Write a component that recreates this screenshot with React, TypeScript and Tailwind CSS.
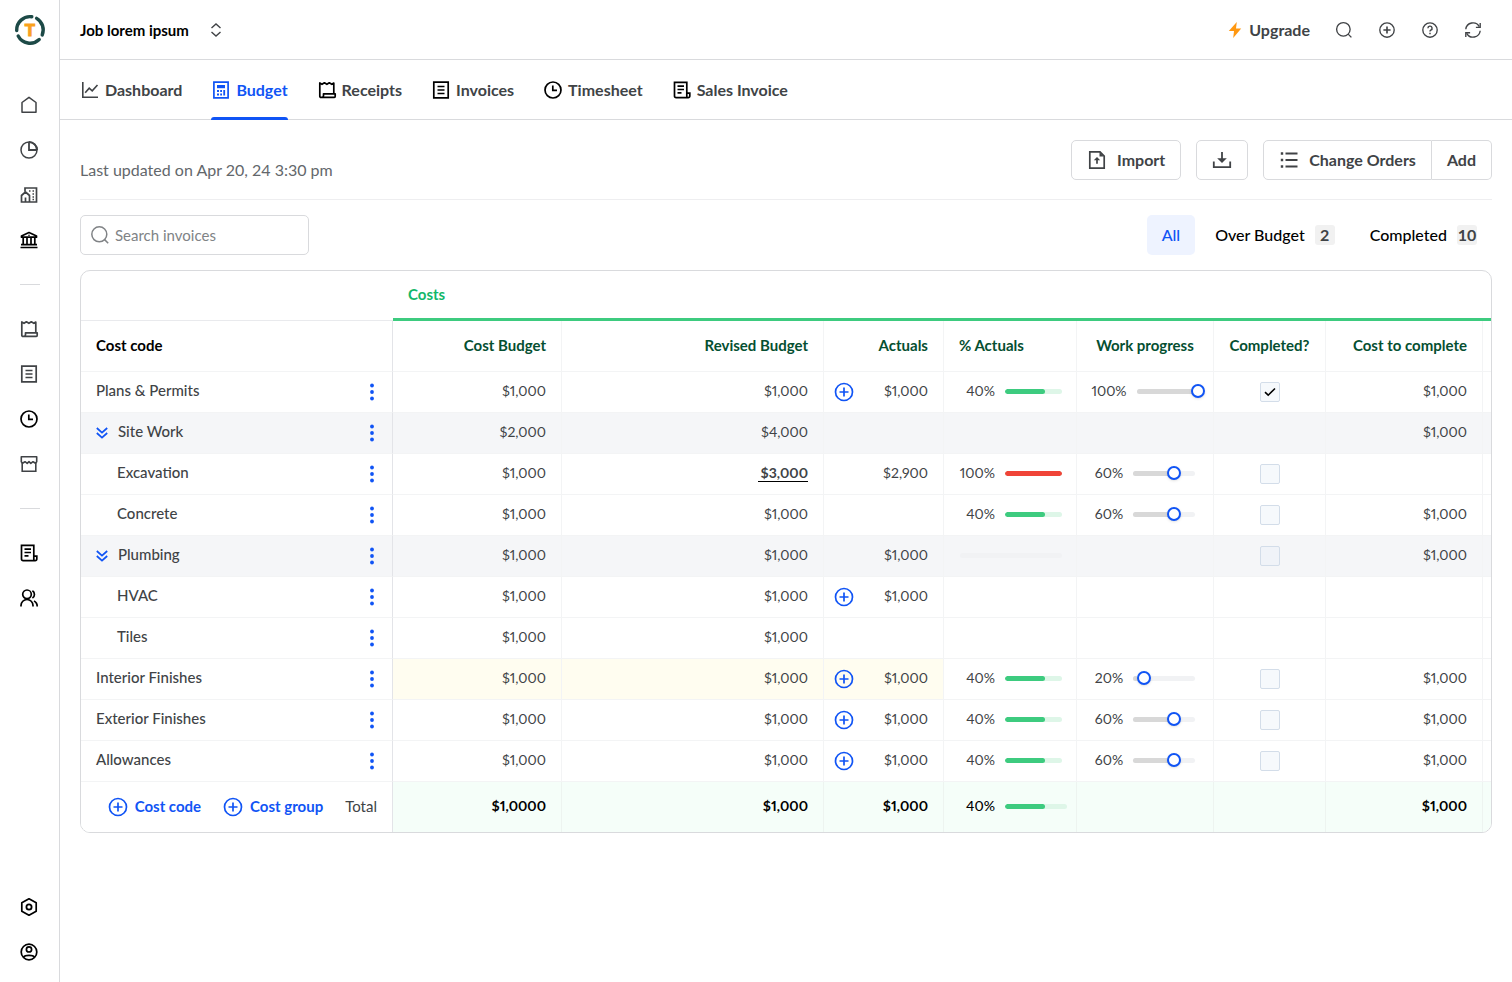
import { useState } from 'react'
import type { ReactNode } from 'react'
import clsx from 'clsx'

type IconProps = { className?: string; children?: ReactNode }

function Icon({ className = 'size-5', children }: IconProps) {
  return (
    <svg
      viewBox="0 0 20 20"
      fill="none"
      stroke="currentColor"
      strokeWidth={1.5}
      className={clsx('shrink-0', className)}
      aria-hidden
    >
      {children}
    </svg>
  )
}

const HomeIcon = () => (
  <Icon>
    <path d="M3 17.2V7.5L10 2.3L17 7.5V17.2Z" strokeLinejoin="round" />
  </Icon>
)

const PieIcon = () => (
  <Icon>
    <circle cx="10" cy="10" r="8" />
    <path d="M10 2V10H18" strokeWidth={1.8} />
    <path d="M10 2A8 8 0 0 1 18 10" strokeWidth={2} />
  </Icon>
)

const BuildingIcon = () => (
  <Icon>
    <path d="M6 6.5V3H17.5V17H2.5V10.5L6.5 7L10.5 10.5V17M6.5 17V12.5" strokeWidth={1.7} />
    <path d="M10 6H11.5M13.5 6H15M13.5 9H15M13.5 12H15M13.5 14.5H15" />
  </Icon>
)

const BankIcon = () => (
  <Icon>
    <path d="M2.5 7.2V6L10 2.5L17.5 6V7.2Z" strokeWidth={1.7} strokeLinejoin="round" />
    <path d="M4.2 8V15M8 8V15M12 8V15M15.8 8V15M2 14.7H18M1.5 17.5H18.5" strokeWidth={1.7} />
    <circle cx="10" cy="5.2" r="0.8" fill="currentColor" stroke="none" />
  </Icon>
)

const ReceiptIcon = () => (
  <Icon>
    <path
      d="M16.8 13.8V3L14.8 4.3L12.3 2.8L9.9 4.3L7.4 2.8L5 4.3L2.8 3V16.2A1.2 1.2 0 0 0 4 17.4H17.2A1.2 1.2 0 0 0 18.2 16.2V13.8H6.5V15.5A1.8 1.8 0 0 1 4.6 17.4"
      strokeWidth={1.7}
      strokeLinejoin="round"
    />
  </Icon>
)

const InvoiceIcon = () => (
  <Icon>
    <path d="M2.8 2.2H17.2V17.8H2.8Z" strokeWidth={1.7} />
    <path d="M6.5 6.5H13.5M6.5 10H13.5M6.5 13.5H13.5" strokeWidth={1.7} />
  </Icon>
)

const ClockIcon = () => (
  <Icon>
    <circle cx="10" cy="10" r="8" strokeWidth={1.7} />
    <path d="M9.8 5.5V10.4H14" strokeWidth={1.7} />
  </Icon>
)

const StoreIcon = () => (
  <Icon>
    <path d="M2.3 2.8H17.7V7.7L16.5 9.2L14 7.7L11.8 9.4L10 7.7L8.2 9.4L6 7.7L3.5 9.2L2.3 7.7Z" strokeWidth={1.6} strokeLinejoin="round" />
    <path d="M3.2 8.5V17.2H16.8V8.5" strokeWidth={1.6} />
  </Icon>
)

const SalesIcon = () => (
  <Icon>
    <path d="M14.8 12.8V2.3H2.5V16A1.6 1.6 0 0 0 4.1 17.7H16.2A1.6 1.6 0 0 0 17.8 16V13.2H14.8V16.2A1.5 1.5 0 0 0 16.2 17.7" strokeWidth={1.7} />
    <path d="M5.5 6.2H12M5.5 9.5H12M5.5 12.8H9.5" strokeWidth={1.7} />
  </Icon>
)

const PeopleIcon = () => (
  <Icon>
    <circle cx="8" cy="6.3" r="4.3" strokeWidth={1.7} />
    <path d="M2 18.5V17.5A6 6 0 0 1 14 17.5V18.5M13.4 2.8A4.2 4.2 0 0 1 13.4 10M15 13A6 6 0 0 1 18.2 18.5" strokeWidth={1.7} />
  </Icon>
)

const SettingsIcon = () => (
  <Icon>
    <path d="M10 1.8L17.2 5.8V14.2L10 18.2L2.8 14.2V5.8Z" strokeWidth={1.7} strokeLinejoin="round" />
    <circle cx="10" cy="10" r="2.6" strokeWidth={1.8} />
  </Icon>
)

const ProfileIcon = () => (
  <Icon>
    <circle cx="10" cy="10" r="7.8" strokeWidth={1.7} />
    <circle cx="10" cy="7.4" r="2.6" strokeWidth={1.7} />
    <path d="M4.5 15.2C6 12.8 14 12.8 15.5 15.2" strokeWidth={1.7} />
  </Icon>
)

const ChartIcon = () => (
  <Icon>
    <path d="M2.8 2V17.2H18M5.2 12.8L9.2 8.2L12.2 10.8L17.5 5" strokeWidth={1.6} />
  </Icon>
)

const CalculatorIcon = () => (
  <Icon>
    <path d="M2.9 2.2H17.1V17.8H2.9Z" strokeWidth={1.7} />
    <path d="M6 5H14V8.2H6Z" fill="currentColor" stroke="none" />
    <path d="M6 11H8M9.2 11H11M6 14.5H8M9.2 14.5H11M13.2 10V15.6" strokeWidth={1.8} />
  </Icon>
)

const PlusCircleIcon = ({ className }: IconProps) => (
  <Icon className={className}>
    <circle cx="10" cy="10" r="8.5" strokeWidth={1.7} />
    <path d="M10 5.5V14.5M5.5 10H14.5" strokeWidth={1.7} />
  </Icon>
)

const SearchIcon = ({ className }: IconProps) => (
  <Icon className={className}>
    <circle cx="9.3" cy="9.3" r="7.5" />
    <path d="M14.6 14.6L18.2 18.2" />
  </Icon>
)

const HelpIcon = () => (
  <Icon className="size-[18px]">
    <circle cx="10" cy="10" r="8" />
    <path d="M7.7 8A2.3 2.3 0 1 1 10.9 10.1C10.2 10.5 10 10.8 10 11.6M10 13V14.6" strokeWidth={1.6} />
  </Icon>
)

const RefreshIcon = () => (
  <Icon className="size-[18px]">
    <path d="M2 9.2A8 8 0 0 1 17 6.3M18 10.8A8 8 0 0 1 3 13.7" />
    <path d="M18 2.2V7H13.2M2 17.8V13H6.8" />
  </Icon>
)

const ImportIcon = () => (
  <Icon>
    <path d="M2.8 1.8H13L17.2 6V18.2H2.8Z" strokeWidth={1.7} />
    <path d="M12.5 2V6.5H17Z" fill="currentColor" stroke="none" />
    <path d="M10 13.8V9" strokeWidth={1.7} />
    <path d="M6.8 10.2L10 7L13.2 10.2Z" fill="currentColor" stroke="none" />
  </Icon>
)

const DownloadIcon = () => (
  <Icon>
    <path d="M1.8 11.5V17.2H18.2V11.5" strokeWidth={1.8} />
    <path d="M10 2V10" strokeWidth={1.8} />
    <path d="M5.2 8.2H14.8L10 13Z" fill="currentColor" stroke="none" />
  </Icon>
)

const ListIcon = () => (
  <Icon>
    <path d="M6.5 3.5H18.5M6.5 10H18.5M6.5 16.5H18.5" strokeWidth={1.8} />
    <path d="M1.8 3.5H4.2M1.8 10H4.2M1.8 16.5H4.2" strokeWidth={2.6} />
  </Icon>
)

const DoubleChevronIcon = () => (
  <svg viewBox="0 0 12 12" fill="none" stroke="currentColor" strokeWidth={1.7} className="size-3" aria-hidden>
    <path d="M0.8 1L6 5.7L11.2 1M0.8 6L6 10.7L11.2 6" />
  </svg>
)

const DotsIcon = () => (
  <svg viewBox="0 0 4 18" fill="currentColor" className="h-[18px] w-1" aria-hidden>
    <circle cx="2" cy="2.5" r="1.9" />
    <circle cx="2" cy="9" r="1.9" />
    <circle cx="2" cy="15.5" r="1.9" />
  </svg>
)

function Logo() {
  return (
    <svg viewBox="0 0 32 32" fill="none" className="size-8" role="img" aria-label="Logo">
      <g stroke="#1d4a47" strokeWidth={3.4} strokeLinecap="round">
        <path d="M2.7 16.5A13.3 13.3 0 0 1 17.8 2.8" />
        <path d="M22.6 4.4A13.3 13.3 0 0 1 28.2 21" />
        <path d="M25.2 25.5A13.3 13.3 0 0 1 4.2 22" />
      </g>
      <text x="16" y="22" textAnchor="middle" fill="#f9a11b" stroke="#f9a11b" strokeWidth={1} fontSize="17" fontWeight="900">
        T
      </text>
    </svg>
  )
}

type NavItem = { label: string; icon: ReactNode; strong?: boolean }

const navGroups: NavItem[][] = [
  [
    { label: 'Home', icon: <HomeIcon /> },
    { label: 'Reports', icon: <PieIcon /> },
    { label: 'Properties', icon: <BuildingIcon /> },
    { label: 'Bank', icon: <BankIcon />, strong: true },
  ],
  [
    { label: 'Receipts', icon: <ReceiptIcon /> },
    { label: 'Invoices', icon: <InvoiceIcon /> },
    { label: 'Timesheet', icon: <ClockIcon />, strong: true },
    { label: 'Vendors', icon: <StoreIcon /> },
  ],
  [
    { label: 'Sales invoices', icon: <SalesIcon />, strong: true },
    { label: 'Team', icon: <PeopleIcon />, strong: true },
  ],
]

const footerNav: NavItem[] = [
  { label: 'Settings', icon: <SettingsIcon />, strong: true },
  { label: 'Profile', icon: <ProfileIcon />, strong: true },
]

const tabs = [
  { label: 'Dashboard', icon: <ChartIcon />, dim: true },
  { label: 'Budget', icon: <CalculatorIcon /> },
  { label: 'Receipts', icon: <ReceiptIcon /> },
  { label: 'Invoices', icon: <InvoiceIcon /> },
  { label: 'Timesheet', icon: <ClockIcon /> },
  { label: 'Sales Invoice', icon: <SalesIcon /> },
]

const filters = [
  { label: 'All' },
  { label: 'Over Budget', count: 2 },
  { label: 'Completed', count: 10 },
]

type Row = {
  name: string
  kind?: 'group' | 'child'
  budget: string
  revised: string
  edited?: boolean
  highlight?: boolean
  addActual?: boolean
  actuals?: string
  percent?: { label: string; fill: number; over?: boolean }
  emptyBar?: boolean
  progress?: { label: string; knob: number }
  completed?: boolean
  toComplete?: string
}

const forty = { label: '40%', fill: 70 }
const sixty = { label: '60%', knob: 63 }

const rows: Row[] = [
  { name: 'Plans & Permits', budget: '$1,000', revised: '$1,000', addActual: true, actuals: '$1,000', percent: forty, progress: { label: '100%', knob: 100 }, completed: true, toComplete: '$1,000' },
  { name: 'Site Work', kind: 'group', budget: '$2,000', revised: '$4,000', toComplete: '$1,000' },
  { name: 'Excavation', kind: 'child', budget: '$1,000', revised: '$3,000', edited: true, actuals: '$2,900', percent: { label: '100%', fill: 100, over: true }, progress: sixty, completed: false },
  { name: 'Concrete', kind: 'child', budget: '$1,000', revised: '$1,000', percent: forty, progress: sixty, completed: false, toComplete: '$1,000' },
  { name: 'Plumbing', kind: 'group', budget: '$1,000', revised: '$1,000', actuals: '$1,000', emptyBar: true, completed: false, toComplete: '$1,000' },
  { name: 'HVAC', kind: 'child', budget: '$1,000', revised: '$1,000', addActual: true, actuals: '$1,000' },
  { name: 'Tiles', kind: 'child', budget: '$1,000', revised: '$1,000' },
  { name: 'Interior Finishes', budget: '$1,000', revised: '$1,000', highlight: true, addActual: true, actuals: '$1,000', percent: forty, progress: { label: '20%', knob: 8 }, completed: false, toComplete: '$1,000' },
  { name: 'Exterior Finishes', budget: '$1,000', revised: '$1,000', addActual: true, actuals: '$1,000', percent: forty, progress: sixty, completed: false, toComplete: '$1,000' },
  { name: 'Allowances', budget: '$1,000', revised: '$1,000', addActual: true, actuals: '$1,000', percent: forty, progress: sixty, completed: false, toComplete: '$1,000' },
]

function NavButton({ item }: { item: NavItem }) {
  return (
    <button
      type="button"
      aria-label={item.label}
      className={clsx('flex h-[45px] w-full items-center justify-center pr-px', item.strong ? 'text-black' : 'text-[#404346]')}
    >
      {item.icon}
    </button>
  )
}

function Sidebar() {
  return (
    <aside className="flex w-[60px] shrink-0 flex-col border-r border-[#d9dadd] pb-2">
      <div className="flex h-[60px] items-center justify-center">
        <Logo />
      </div>
      <nav className="flex flex-1 flex-col pt-[22px]">
        {navGroups.map((group, i) => (
          <div key={group[0].label}>
            {i > 0 ? (
              <div className="flex h-11 items-center justify-center">
                <hr className="w-5 border-[#d9dadd]" />
              </div>
            ) : null}
            {group.map((item) => (
              <NavButton key={item.label} item={item} />
            ))}
          </div>
        ))}
        <div className="mt-auto">
          {footerNav.map((item) => (
            <NavButton key={item.label} item={item} />
          ))}
        </div>
      </nav>
    </aside>
  )
}

function Header() {
  return (
    <header className="flex h-[60px] items-center justify-between border-b border-[#d9dadd] pr-[30px] pl-5">
      <button type="button" className="flex items-center gap-5 font-bold text-black">
        Job lorem ipsum
        <svg viewBox="0 0 14 14" fill="none" stroke="#404346" strokeWidth={1.4} className="size-3.5" aria-hidden>
          <path d="M2.5 5L7 1L11.5 5M2.5 9L7 13L11.5 9" />
        </svg>
      </button>
      <div className="flex items-center gap-[25px]">
        <button type="button" className="flex items-center gap-[7px] text-base leading-5 font-bold">
          <svg viewBox="0 0 14 16" fill="#ff9811" className="h-4 w-3.5" aria-hidden>
            <path d="M8.8 0L0.8 9H6L5.2 16L13.2 6.6H8Z" />
          </svg>
          Upgrade
        </button>
        <button type="button" aria-label="Search">
          <SearchIcon className="size-[18px]" />
        </button>
        <button type="button" aria-label="Add">
          <Icon className="size-[18px]">
            <circle cx="10" cy="10" r="8" />
            <path d="M10 6V14M6 10H14" strokeWidth={1.8} />
          </Icon>
        </button>
        <button type="button" aria-label="Help">
          <HelpIcon />
        </button>
        <button type="button" aria-label="Refresh">
          <RefreshIcon />
        </button>
      </div>
    </header>
  )
}

function Tabs() {
  const [active, setActive] = useState('Budget')

  return (
    <nav className="flex h-[60px] gap-[29px] border-b border-[#d9dadd] px-5 text-base leading-5">
      {tabs.map((tab) => {
        const isActive = tab.label === active
        return (
          <button
            key={tab.label}
            type="button"
            onClick={() => setActive(tab.label)}
            className={clsx('relative flex items-center gap-[5px] font-bold', isActive && 'text-[#1054f5]')}
          >
            <span className={clsx('flex', !isActive && !tab.dim && 'text-black')}>{tab.icon}</span>
            {tab.label}
            {isActive ? <span className="absolute inset-x-0 -bottom-px h-[3px] rounded-t-sm bg-[#1054f5]" /> : null}
          </button>
        )
      })}
    </nav>
  )
}

function Toolbar() {
  const btn = 'flex h-10 items-center rounded-[5px] border border-[#d9dadd] bg-white px-[15px] font-bold'

  return (
    <div className="flex items-end justify-between border-b border-[#eeeef0] pb-[19px] text-base leading-5">
      <p className="text-[#63676b]">Last updated on Apr 20, 24 3:30 pm</p>
      <div className="flex gap-[15px]">
        <button type="button" className={`${btn} gap-2.5`}>
          <ImportIcon />
          Import
        </button>
        <button type="button" aria-label="Download" className={btn}>
          <DownloadIcon />
        </button>
        <div className="flex">
          <button type="button" className={`${btn} gap-2.5 rounded-r-none`}>
            <ListIcon />
            Change Orders
          </button>
          <button type="button" className={`${btn} rounded-l-none border-l-0`}>
            Add
          </button>
        </div>
      </div>
    </div>
  )
}

function FilterBar() {
  const [active, setActive] = useState('All')

  return (
    <div className="flex items-center justify-between py-[15px]">
      <label className="flex h-10 w-[229px] items-center gap-[5px] rounded-[5px] border border-[#d9dadd] pl-[9px] text-[#808386]">
        <SearchIcon className="size-5" />
        <input type="text" aria-label="Search invoices" placeholder="Search invoices" className="w-full min-w-0 outline-none placeholder:text-[#808386]" />
      </label>
      <div className="flex gap-[5px] text-base leading-5">
        {filters.map((f) => (
          <button
            key={f.label}
            type="button"
            onClick={() => setActive(f.label)}
            className={clsx(
              'flex h-10 items-center gap-2.5 rounded-[5px] px-[15px] font-medium',
              f.label === active ? 'bg-[#eef3ff] text-[#1054f5]' : 'text-black',
            )}
          >
            {f.label}
            {f.count ? (
              <span className="flex h-5 w-5 items-center justify-center rounded-[3px] bg-[#f1f1f1] font-bold text-[#404346]">
                {f.count}
              </span>
            ) : null}
          </button>
        ))}
      </div>
    </div>
  )
}

function PercentBar({ label, fill, over, wide }: { label: string; fill: number; over?: boolean; wide?: boolean }) {
  return (
    <div className="flex items-center justify-end gap-2.5">
      {label}
      <span className={clsx('h-[5px] shrink-0 overflow-hidden rounded-full bg-[#def6e8]', wide ? 'w-[62px]' : 'w-[57px]')}>
        <span className={clsx('block h-full rounded-full', over ? 'bg-[#f04438]' : 'bg-[#3dcb7f]')} style={{ width: `${fill}%` }} />
      </span>
    </div>
  )
}

function ProgressSlider({ name, label, knob }: { name: string; label: string; knob: number }) {
  const [value, setValue] = useState(knob)

  return (
    <div className="flex items-center justify-center gap-2.5">
      {label}
      <span className="relative h-[5px] w-[62px] shrink-0 rounded-full bg-[#f1f2f4]">
        <span className="block h-full rounded-full bg-[#d8d8d8]" style={{ width: `${value}%` }} />
        <input
          type="range"
          aria-label={`${name} work progress`}
          value={value}
          onChange={(e) => setValue(Number(e.target.value))}
          className="absolute top-[-5px] left-0 h-3.5 w-[68px] appearance-none bg-transparent [&::-webkit-slider-thumb]:size-3.5 [&::-webkit-slider-thumb]:appearance-none [&::-webkit-slider-thumb]:rounded-full [&::-webkit-slider-thumb]:border-2 [&::-webkit-slider-thumb]:border-[#1054f5] [&::-webkit-slider-thumb]:bg-white [&::-webkit-slider-thumb]:shadow-sm"
        />
      </span>
    </div>
  )
}

function CompletedBox({ name, checked }: { name: string; checked: boolean }) {
  return (
    <span className="grid place-items-center">
      <input
        type="checkbox"
        aria-label={`${name} completed`}
        defaultChecked={checked}
        className="peer col-start-1 row-start-1 size-5 appearance-none rounded-xs border border-[#d3dde9] bg-[#e9f0f8]/40"
      />
      <svg viewBox="0 0 12 12" fill="none" stroke="#000" strokeWidth={1.6} className="pointer-events-none col-start-1 row-start-1 hidden size-3 peer-checked:block" aria-hidden>
        <path d="M1 6.2L4.2 9.2L11 2.5" />
      </svg>
    </span>
  )
}

const line = 'border-r border-b border-[#f3f4f5]'
const cell = `${line} px-[15px] pb-0.5`
const money = `${cell} text-right`

function BudgetRow({ row }: { row: Row }) {
  const isGroup = row.kind === 'group'
  const tint = row.highlight && 'bg-[#fffdf0]'

  return (
    <tr className={clsx('h-[41px] text-sm', isGroup && 'bg-[#f5f6f8]')}>
      <th scope="row" className="border-r border-b border-r-[#e3e4e8] border-b-[#f3f4f5] px-[15px] text-left text-[15px] font-medium">
        <div className={clsx('flex items-center', row.kind === 'child' && 'pl-[21px]')}>
          {isGroup ? (
            <button type="button" aria-label={`Collapse ${row.name}`} className="mr-2.5 text-[#1054f5]">
              <DoubleChevronIcon />
            </button>
          ) : null}
          <span className="pb-0.5">{row.name}</span>
          <button type="button" aria-label={`${row.name} options`} className="mr-[3px] ml-auto text-[#1054f5]">
            <DotsIcon />
          </button>
        </div>
      </th>
      <td className={clsx(money, tint)}>{row.budget}</td>
      <td className={clsx(money, tint)}>
        {row.edited ? <span className="border-b border-black pl-[3px] font-bold">{row.revised}</span> : row.revised}
      </td>
      <td className={clsx(line, 'pr-[15px] pl-2.5', tint)}>
        <div className="flex items-center justify-between">
          {row.addActual ? (
            <button type="button" aria-label={`Add actual to ${row.name}`} className="text-[#1054f5]">
              <PlusCircleIcon />
            </button>
          ) : null}
          <span className="ml-auto pb-0.5">{row.actuals}</span>
        </div>
      </td>
      <td className={`${line} pr-3.5 pb-0.5 pl-4`}>
        {row.percent ? <PercentBar {...row.percent} /> : null}
        {row.emptyBar ? <div className="h-[5px] rounded-full bg-[#f1f2f4]" /> : null}
      </td>
      <td className={cell}>{row.progress ? <ProgressSlider name={row.name} {...row.progress} /> : null}</td>
      <td className={`${line} pr-3.5 pl-4`}>
        {row.completed !== undefined ? <CompletedBox name={row.name} checked={row.completed} /> : null}
      </td>
      <td className={money}>{row.toComplete}</td>
      <td className="border-b border-[#f3f4f5]" />
    </tr>
  )
}

function BudgetTable() {
  const head = `${cell} font-bold whitespace-nowrap`
  const total = 'border-r border-[#edf4f0] px-[15px] pb-0.5 text-right font-bold text-black'

  return (
    <div className="overflow-hidden rounded-[10px] border border-[#d9dadd]">
      <table className="w-full table-fixed border-separate border-spacing-0 proportional-nums">
        <colgroup>
          <col className="w-[312px]" />
          <col className="w-[169px]" />
          <col />
          <col className="w-[120px]" />
          <col className="w-[133px]" />
          <col className="w-[137px]" />
          <col className="w-[112px]" />
          <col className="w-[157px]" />
          <col className="w-2" />
        </colgroup>
        <thead>
          <tr className="h-[50px]">
            <td className="border-b border-[#e9eaed]" />
            <th scope="colgroup" colSpan={8} className="border-b-3 border-[#3dcb7f] px-[15px] pb-0.5 text-left font-bold text-[#12b76a]">
              Costs
            </th>
          </tr>
          <tr className="h-[51px] text-[#054f31]">
            <th scope="col" className="border-r border-b border-r-[#e3e4e8] border-b-[#f3f4f5] px-[15px] pb-0.5 text-left font-bold text-black">
              Cost code
            </th>
            <th scope="col" className={`${head} text-right`}>Cost Budget</th>
            <th scope="col" className={`${head} text-right`}>Revised Budget</th>
            <th scope="col" className={`${head} text-right`}>Actuals</th>
            <th scope="col" className={`${head} text-left`}>% Actuals</th>
            <th scope="col" className={`${head} text-center`}>Work progress</th>
            <th scope="col" className={`${head} text-center`}>Completed?</th>
            <th scope="col" className={`${head} text-right`}>Cost to complete</th>
            <td className="border-b border-[#f3f4f5]" />
          </tr>
        </thead>
        <tbody>
          {rows.map((row) => (
            <BudgetRow key={row.name} row={row} />
          ))}
        </tbody>
        <tfoot>
          <tr className="h-[50px] bg-[#f5fef9] text-sm">
            <td className="border-r border-[#e3e4e8] bg-white px-[15px] text-[15px]">
              <div className="flex items-center justify-end gap-[22px]">
                <button type="button" className="flex items-center gap-[7px] font-bold text-[#1054f5]">
                  <PlusCircleIcon />
                  Cost code
                </button>
                <button type="button" className="flex items-center gap-[7px] font-bold text-[#1054f5]">
                  <PlusCircleIcon />
                  Cost group
                </button>
                <span>Total</span>
              </div>
            </td>
            <td className={total}>$1,0000</td>
            <td className={total}>$1,000</td>
            <td className={total}>$1,000</td>
            <td className="border-r border-[#edf4f0] px-[9px] pb-0.5 font-medium text-black">
              <PercentBar label="40%" fill={65} wide />
            </td>
            <td className={total} />
            <td className={total} />
            <td className={total}>$1,000</td>
            <td />
          </tr>
        </tfoot>
      </table>
    </div>
  )
}

export default function App() {
  return (
    <div className="flex min-h-screen bg-white font-['Lato',sans-serif] text-[15px] leading-5 text-[#404346]">
      <Sidebar />
      <div className="min-w-0 flex-1">
        <Header />
        <Tabs />
        <main className="p-5">
          <Toolbar />
          <FilterBar />
          <BudgetTable />
        </main>
      </div>
    </div>
  )
}
